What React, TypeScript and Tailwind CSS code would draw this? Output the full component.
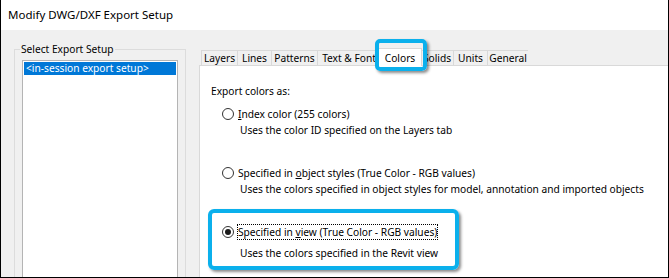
import React from "react";

function Radio({ checked }: { checked?: boolean }) {
  return (
    <span className="w-[12px] h-[12px] rounded-full border border-[#333333] bg-white flex items-center justify-center shrink-0">
      {checked && <span className="w-[6px] h-[6px] rounded-full bg-[#1a1a1a]" />}
    </span>
  );
}

const tabs: { label: string; w: string; selected?: boolean }[] = [
  { label: "Layers", w: "w-[36px]" },
  { label: "Lines", w: "w-[34px]" },
  { label: "Patterns", w: "w-[46px]" },
  { label: "Text & Font", w: "w-[63px]" },
  { label: "Colors", w: "w-[44px]", selected: true },
  { label: "Solids", w: "w-[33px]" },
  { label: "Units", w: "w-[34px]" },
  { label: "General", w: "w-[41px]" },
];

export default function App() {
  return (
    <div className="w-[669px] h-[278px] overflow-hidden bg-[#f0f0f0] border-l border-r border-b border-black flex flex-col relative font-['Noto_Sans',sans-serif] text-black">
      <div className="h-[30px] bg-white pl-[7px] flex items-center text-[11.5px] shrink-0 pb-px">
        Modify DWG/DXF Export Setup
      </div>
      <div className="flex flex-1 min-h-0 text-[10.2px]">
        <div className="pl-[13px] pt-[19px] shrink-0">
          <div className="relative w-[172px] h-[300px] border border-[#dcdcdc]">
            <span className="absolute -top-[9px] left-[5px] bg-[#f0f0f0] px-px leading-[16px]">
              Select Export Setup
            </span>
            <div className="ml-[7px] mt-[10px] w-[156px] h-[300px] bg-white border border-[#b4b4b4] p-px">
              <div className="h-[13px] bg-[#0078d7] text-white leading-[13px] pl-[2px] whitespace-nowrap">
                &lt;in-session export setup&gt;
              </div>
            </div>
          </div>
        </div>
        <div className="ml-[13px] mt-[20px] flex-1 flex flex-col">
          <div className="flex items-end h-[15px] pl-[2px] relative z-10">
            {tabs.map((t) =>
              t.selected ? (
                <div
                  key={t.label}
                  className={`${t.w} -mx-[2px] h-[18px] -mb-px bg-white border border-b-0 border-[#d9d9d9] leading-[16px] flex items-start justify-center pt-[1px] relative z-20 whitespace-nowrap`}
                >
                  {t.label}
                </div>
              ) : (
                <div
                  key={t.label}
                  className={`${t.w} h-[15px] bg-[#f0f0f0] border border-b-0 border-r-0 border-[#d9d9d9] leading-[14px] flex items-center justify-center whitespace-nowrap overflow-hidden`}
                >
                  {t.label}
                </div>
              )
            )}
          </div>
          <div className="flex-1 bg-white border-t border-l border-[#d9d9d9] pl-[11px] pt-[17px] leading-[16px]">
            <div>Export colors as:</div>
            <div className="ml-[11px] mt-[7px]">
              <div className="flex items-center gap-[4px]">
                <Radio />
                <span>
                  <span className="underline">I</span>ndex color (255 colors)
                </span>
              </div>
              <div className="pl-[18px]">Uses the color ID specified on the Layers tab</div>
            </div>
            <div className="ml-[11px] mt-[27px]">
              <div className="flex items-center gap-[4px]">
                <Radio />
                <span>
                  Specified in <span className="underline">o</span>bject styles (True Color - RGB values)
                </span>
              </div>
              <div className="pl-[18px]">
                Uses the colors specified in object styles for model, annotation and imported objects
              </div>
            </div>
            <div className="ml-[11px] mt-[27px]">
              <div className="flex items-center gap-[4px]">
                <Radio checked />
                <span className="border border-dotted border-black leading-[14px] -ml-px">
                  Specified in <span className="underline">v</span>iew (True Color - RGB values)
                </span>
              </div>
              <div className="pl-[18px] mt-[5px]">Uses the colors specified in the Revit view</div>
            </div>
          </div>
        </div>
      </div>
      <div className="absolute left-[374px] top-[39px] w-[52px] h-[32px] rounded-[5px] border-[4px] border-[#0bb0ec] shadow-[2px_2px_3px_rgba(0,0,0,0.45)] z-30 pointer-events-none" />
      <div className="absolute left-[207px] top-[209px] w-[251px] h-[61px] rounded-[6px] border-[4px] border-[#0bb0ec] shadow-[2px_2px_3px_rgba(0,0,0,0.45)] z-30 pointer-events-none" />
    </div>
  );
}
